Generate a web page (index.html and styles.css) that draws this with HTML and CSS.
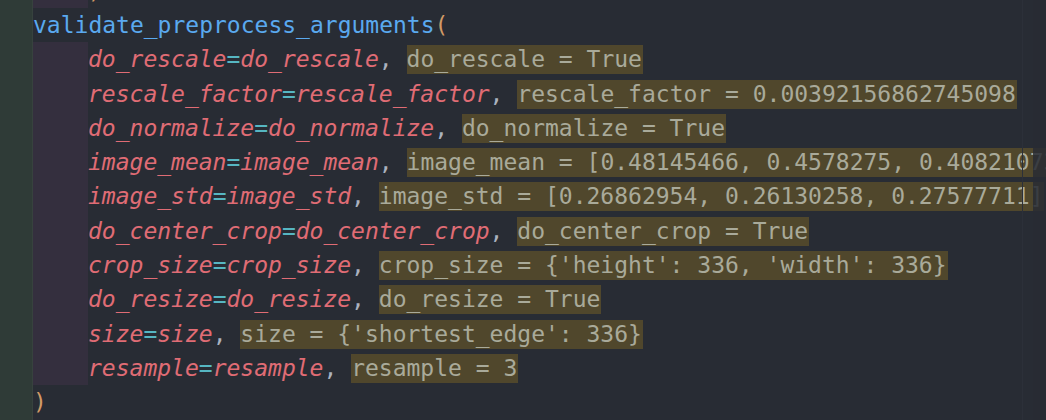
FILE: index.html
```html
<!DOCTYPE html>
<html>
<head>
<meta charset="utf-8">
<link rel="stylesheet" href="styles.css">
</head>
<body>
<div class="editor">
  <div class="gutter"></div>
  <div class="code">
    <div class="lines">
      <div class="line"><span class="indent">    </span><span class="punc-o">)</span></div>
      <div class="line"><span class="fn">validate_preprocess_arguments</span><span class="punc-o">(</span></div>
      <div class="line"><span class="indent">    </span><span class="p">do_rescale</span><span class="eq">=</span><span class="p">do_rescale</span><span class="c">, </span><span class="hint">do_rescale = True</span></div>
      <div class="line"><span class="indent">    </span><span class="p">rescale_factor</span><span class="eq">=</span><span class="p">rescale_factor</span><span class="c">, </span><span class="hint">rescale_factor = 0.00392156862745098</span></div>
      <div class="line"><span class="indent">    </span><span class="p">do_normalize</span><span class="eq">=</span><span class="p">do_normalize</span><span class="c">, </span><span class="hint">do_normalize = True</span></div>
      <div class="line"><span class="indent">    </span><span class="p">image_mean</span><span class="eq">=</span><span class="p">image_mean</span><span class="c">, </span><span class="hint">image_mean = [0.48145466, 0.4578275, 0.40821073]</span></div>
      <div class="line"><span class="indent">    </span><span class="p">image_std</span><span class="eq">=</span><span class="p">image_std</span><span class="c">, </span><span class="hint">image_std = [0.26862954, 0.26130258, 0.27577711]</span></div>
      <div class="line"><span class="indent">    </span><span class="p">do_center_crop</span><span class="eq">=</span><span class="p">do_center_crop</span><span class="c">, </span><span class="hint">do_center_crop = True</span></div>
      <div class="line"><span class="indent">    </span><span class="p">crop_size</span><span class="eq">=</span><span class="p">crop_size</span><span class="c">, </span><span class="hint">crop_size = {'height': 336, 'width': 336}</span></div>
      <div class="line"><span class="indent">    </span><span class="p">do_resize</span><span class="eq">=</span><span class="p">do_resize</span><span class="c">, </span><span class="hint">do_resize = True</span></div>
      <div class="line"><span class="indent">    </span><span class="p">size</span><span class="eq">=</span><span class="p">size</span><span class="c">, </span><span class="hint">size = {'shortest_edge': 336}</span></div>
      <div class="line"><span class="indent">    </span><span class="p">resample</span><span class="eq">=</span><span class="p">resample</span><span class="c">, </span><span class="hint">resample = 3</span></div>
      <div class="line"><span class="punc-o">)</span></div>
      <div class="line"></div>
    </div>
    <div class="ruler"></div>
    <div class="scrollbar"></div>
  </div>
</div>
</body>
</html>
```
FILE: styles.css
```css
html, body {
  margin: 0;
  padding: 0;
  background: #282c34;
}
.editor {
  display: flex;
  width: 1046px;
  height: 420px;
  overflow: hidden;
  background: #282c34;
}
.gutter {
  flex: 0 0 32px;
  background: #2f3b37;
  border-right: 1px solid #37423e;
}
.code {
  position: relative;
  flex: 1 1 auto;
  overflow: hidden;
  font-family: "DejaVu Sans Mono", "Liberation Mono", monospace;
  font-size: 23px;
}
.lines {
  margin-top: -26.3px;
}
.line {
  height: 34.3px;
  line-height: 34.3px;
  white-space: pre;
  color: #abb2bf;
}
.indent {
  display: inline-block;
  width: 55px;
  height: 34.3px;
  vertical-align: top;
  background: #342f3e;
}
.fn {
  color: #5aa9ef;
}
.punc-o {
  color: #d19a66;
}
.p {
  color: #e06c75;
  font-style: italic;
}
.eq {
  color: #56b6c2;
}
.c {
  color: #abb2bf;
}
.hint {
  display: inline-block;
  line-height: 29px;
  background: #50472c;
  color: #a9aa9a;
  padding-right: 1px;
}
.ruler {
  position: absolute;
  top: 0;
  bottom: 0;
  left: 989px;
  width: 1px;
  background: #2c3039;
}
.scrollbar {
  position: absolute;
  top: 0;
  bottom: 0;
  left: 1000px;
  width: 14px;
  background: rgba(40, 44, 52, 0.85);
}
```
